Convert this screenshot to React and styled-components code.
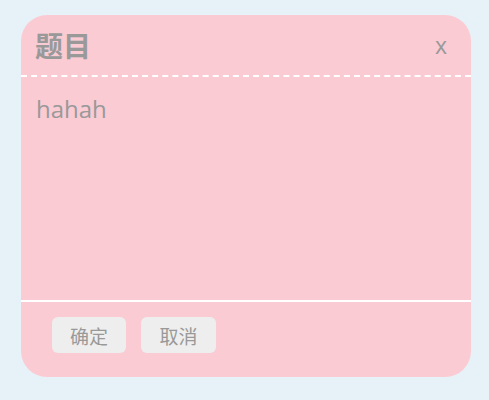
import * as React from "react";
import styled, { createGlobalStyle } from "styled-components";

const GlobalStyle = createGlobalStyle`
  html, body {
    margin: 0;
    padding: 0;
    background: #e7f2f8;
    font-family: "Noto Sans", "Open Sans", "Noto Sans CJK SC", sans-serif;
  }
`;

const Page = styled.div`
  width: 489px;
  height: 400px;
  padding: 15px 0 0 21px;
  box-sizing: border-box;
`;

const Dialog = styled.div`
  width: 450px;
  height: 362px;
  background: #fbcbd3;
  border-radius: 26px;
  display: flex;
  flex-direction: column;
  overflow: hidden;
  color: #999999;
`;

const Header = styled.div`
  height: 58px;
  flex: none;
  display: flex;
  align-items: center;
  justify-content: space-between;
  padding: 1px 24px 1px 14px;
  border-bottom: 2px dashed #ffffff;
`;

const Title = styled.h2`
  margin: 0;
  font-family: "Noto Sans CJK SC", sans-serif;
  font-size: 28px;
  font-weight: 700;
  line-height: 1;
`;

const Close = styled.span`
  font-family: "Open Sans", "Noto Sans", sans-serif;
  font-size: 23px;
  line-height: 1;
  cursor: pointer;
`;

const Body = styled.div`
  flex: 1;
  padding: 15px 15px;
  font-family: "Open Sans", "Noto Sans", sans-serif;
  font-size: 24px;
  line-height: 34px;
  border-bottom: 2px solid #ffffff;
`;

const Footer = styled.div`
  height: 75px;
  flex: none;
  box-sizing: border-box;
  display: flex;
  gap: 15px;
  padding: 15px 0 0 31px;
`;

const Button = styled.button`
  height: 36px;
  width: ${(p) => p.$w || 75}px;
  border: none;
  border-radius: 6px;
  background: #eeeeee;
  color: #999999;
  font-family: "Noto Sans CJK SC", sans-serif;
  font-size: 19px;
  padding: 0;
  cursor: pointer;
`;

const App = () => {
  return (
    <Page>
      <GlobalStyle />
      <Dialog>
        <Header>
          <Title>题目</Title>
          <Close>x</Close>
        </Header>
        <Body>hahah</Body>
        <Footer>
          <Button $w={74}>确定</Button>
          <Button>取消</Button>
        </Footer>
      </Dialog>
    </Page>
  );
};

export default App;
